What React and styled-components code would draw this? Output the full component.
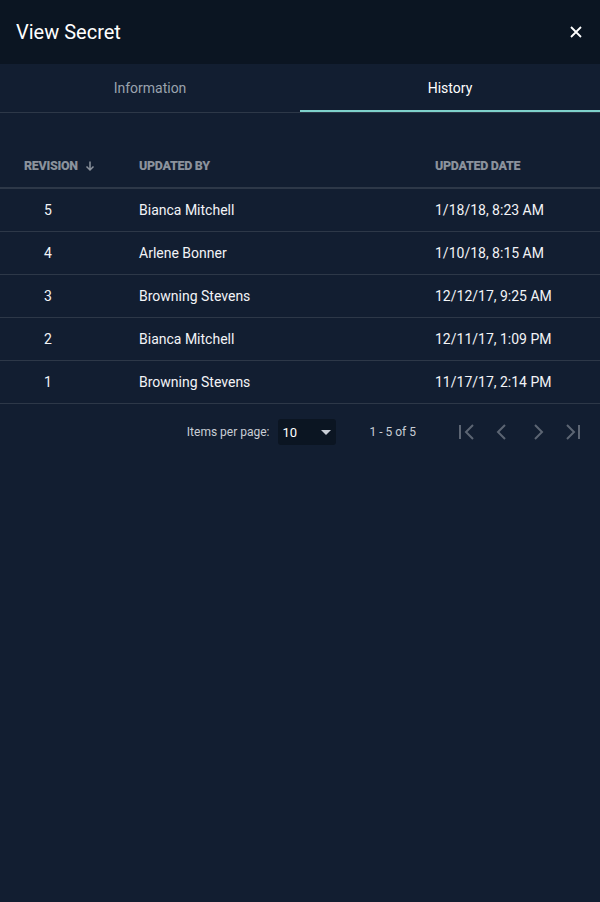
import React from "react";
import styled, { createGlobalStyle } from "styled-components";

const GlobalStyle = createGlobalStyle`
    html, body {
        margin: 0;
        padding: 0;
        background: #121e31;
        font-family: Roboto, "Liberation Sans", sans-serif;
    }
`;

const rows = [
    { rev: 5, by: "Bianca Mitchell", date: "1/18/18, 8:23 AM" },
    { rev: 4, by: "Arlene Bonner", date: "1/10/18, 8:15 AM" },
    { rev: 3, by: "Browning Stevens", date: "12/12/17, 9:25 AM" },
    { rev: 2, by: "Bianca Mitchell", date: "12/11/17, 1:09 PM" },
    { rev: 1, by: "Browning Stevens", date: "11/17/17, 2:14 PM" },
];

const navIcons = [
    "M8 5V19M21 5L14 12L21 19",
    "M17 5L10 12L17 19",
    "M11 5L18 12L11 19",
    "M7 5L14 12L7 19M19 5V19",
];

export default function App() {
    return (
        <>
            <GlobalStyle />
            <Page>
                <Header>
                    <Title>View Secret</Title>
                    <CloseButton aria-label="close">
                        <svg width="14" height="14" viewBox="0 0 14 14">
                            <path d="M2 2L12 12M12 2L2 12" stroke="#fff" strokeWidth="1.8" />
                        </svg>
                    </CloseButton>
                </Header>

                <Tabs>
                    <Tab>Information</Tab>
                    <Tab active>History</Tab>
                </Tabs>

                <Table>
                    <HeadRow>
                        <HeadCell>
                            REVISION
                            <svg width="12" height="12" viewBox="0 0 12 12">
                                <path d="M6 1.5V10M2.5 6.5L6 10L9.5 6.5" stroke="#8b929c" strokeWidth="1.5" fill="none" />
                            </svg>
                        </HeadCell>
                        <HeadCell>UPDATED BY</HeadCell>
                        <HeadCell>UPDATED DATE</HeadCell>
                    </HeadRow>
                    {rows.map((r) => (
                        <Row key={r.rev}>
                            <Cell center>{r.rev}</Cell>
                            <Cell>{r.by}</Cell>
                            <Cell>{r.date}</Cell>
                        </Row>
                    ))}
                </Table>

                <Paginator>
                    <PageLabel>Items per page:</PageLabel>
                    <Select>
                        <span>10</span>
                        <svg width="10" height="5" viewBox="0 0 10 5">
                            <path d="M0 0H10L5 5Z" fill="#c9ced6" />
                        </svg>
                    </Select>
                    <RangeLabel>1 - 5 of 5</RangeLabel>
                    <NavButtons>
                        {navIcons.map((d) => (
                            <NavButton key={d}>
                                <svg width="24" height="24" viewBox="0 0 24 24">
                                    <path d={d} stroke="currentColor" strokeWidth="2" fill="none" />
                                </svg>
                            </NavButton>
                        ))}
                    </NavButtons>
                </Paginator>
            </Page>
        </>
    );
}

const Page = styled.div`
    width: 600px;
    min-height: 902px;
    background: #121e31;
    color: #ffffff;
`;

const Header = styled.div`
    height: 64px;
    background: #0b1522;
    display: flex;
    align-items: center;
    justify-content: space-between;
    padding: 0 16px;
    box-sizing: border-box;
`;

const Title = styled.div`
    font-size: 20px;
    color: #ffffff;
`;

const CloseButton = styled.div`
    width: 24px;
    height: 24px;
    display: flex;
    align-items: center;
    justify-content: center;
    margin-right: -4px;
`;

const Tabs = styled.div`
    display: flex;
    height: 48px;
    border-bottom: 1px solid #2d3848;
`;

const Tab = styled.div`
    flex: 1;
    display: flex;
    align-items: center;
    justify-content: center;
    font-size: 14px;
    font-weight: 400;
    color: ${(p) => (p.active ? "#ffffff" : "#9aa3ae")};
    box-shadow: ${(p) => (p.active ? "inset 0 -2px 0 #7fd2cc" : "none")};
`;

const Table = styled.div`
    margin-top: 27px;
`;

const grid = `
    display: grid;
    grid-template-columns: 139px 296px 1fr;
    align-items: center;
`;

const HeadRow = styled.div`
    ${grid}
    height: 43px;
    padding-top: 4px;
    border-bottom: 2px solid #2d3848;
`;

const HeadCell = styled.div`
    display: flex;
    align-items: center;
    gap: 6px;
    font-size: 12.5px;
    font-weight: 900;
    letter-spacing: -0.3px;
    color: #8b929c;

    &:first-child {
        padding-left: 24px;
    }
`;

const Row = styled.div`
    ${grid}
    height: 42px;
    border-bottom: 1px solid #2d3848;
`;

const Cell = styled.div`
    font-size: 14px;
    color: #f2f4f7;
    ${(p) => (p.center ? "width: 96px; text-align: center;" : "")}
`;

const Paginator = styled.div`
    display: flex;
    align-items: center;
    justify-content: flex-end;
    height: 56px;
    padding-right: 16px;
    font-size: 12px;
    color: #c9ced6;
`;

const PageLabel = styled.div`
    margin-right: 8px;
`;

const Select = styled.div`
    width: 58px;
    height: 26px;
    box-sizing: border-box;
    background: #0b1522;
    border-radius: 3px;
    display: flex;
    align-items: center;
    justify-content: space-between;
    padding: 0 5px 0 5px;
    color: #ffffff;
    font-size: 13px;
`;

const RangeLabel = styled.div`
    margin: 0 36px 0 34px;
`;

const NavButtons = styled.div`
    display: flex;
    gap: 12px;
`;

const NavButton = styled.div`
    width: 24px;
    height: 24px;
    color: #5c6573;
`;
